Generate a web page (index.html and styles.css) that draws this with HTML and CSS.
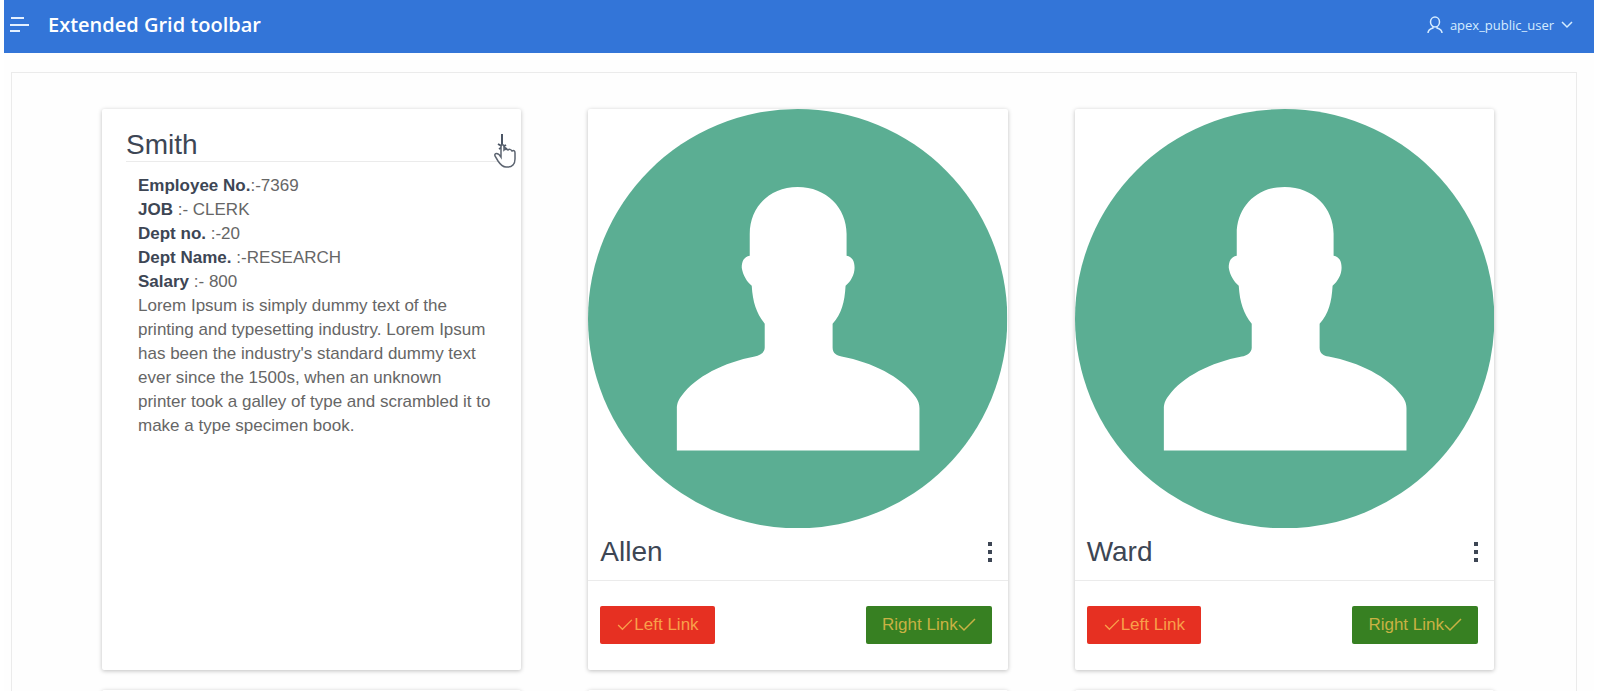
FILE: index.html
```html
<!DOCTYPE html>
<html lang="en">
<head>
  <meta charset="UTF-8">
  <meta name="viewport" content="width=device-width, initial-scale=1">
  <title>Extended Grid toolbar</title>
  <link rel="stylesheet" href="styles.css">
</head>
<body>

<!-- shared shapes -->
<svg class="symbols" aria-hidden="true">
  <symbol id="person" viewBox="0 0 420 420">
    <circle cx="210" cy="210" r="210" fill="#5bae93"/>
    <path fill="#fff" d="M210 78c29 0 49 21 49 47v22c6 1 8 6 8 12 0 7-4 14-9 18-1 17-4 28-13 38v24c0 6 4 8 9 9 31 6 59 20 73 39 4 5 5 9 5 13v42H89v-42c0-4 1-8 5-13 14-19 42-33 73-39 5-1 10-4 10-9v-24c-8-10-12-21-13-38-5-4-9-11-10-18 0-6 2-11 8-12l0-22c0-26 19-47 48-47z"/>
  </symbol>
  <symbol id="check" viewBox="0 0 18 14">
    <path fill="none" stroke="currentColor" stroke-width="1.5" d="M1 7l5 5L17 1"/>
  </symbol>
  <symbol id="dots" viewBox="0 0 6 20">
    <path fill="currentColor" d="M1 0h4v4H1zM1 8h4v4H1zM1 16h4v4H1z"/>
  </symbol>
</svg>

<div class="page">
  <header class="header">
    <button type="button" class="nav-btn" aria-label="Main navigation">
      <svg width="20" height="16" viewBox="0 0 20 16"><path d="M1 1h13M0 8h19M0 14h10" stroke="#e4f0ff" stroke-width="2"/></svg>
    </button>
    <h1 class="app-title">Extended Grid toolbar</h1>
    <button type="button" class="user-btn">
      <svg width="16" height="18" viewBox="0 0 16 18" fill="none" stroke="currentColor" stroke-width="1.5"><ellipse cx="8" cy="6" rx="4.5" ry="5"/><path d="M1 17c0-3 2-4 5-5l0-2M15 17c0-3-2-4-5-5l0-2"/></svg>
      <span>apex_public_user</span>
      <svg width="12" height="8" viewBox="0 0 12 8" fill="none" stroke="currentColor" stroke-width="1.5"><path d="M1 1l5 5 5-5"/></svg>
    </button>
  </header>

  <main class="content">
    <div class="region">
      <article class="card card-open">
        <h2 class="card-title">Smith</h2>
        <button type="button" class="close-btn" aria-label="Close">
          <svg width="24" height="36" viewBox="0 0 24 36"><path d="M8 1v14M4 11l9 5M5 16l7-4" stroke="#4c5665" stroke-width="2"/><path d="M7 24V14c0-3 3-3 3 0v3c1-1 3-1 4 0 1-1 3-1 4 1 2-1 3 0 3 2v6c0 5-3 8-7 8h-2c-4 0-6-3-8-6l-3-5c-1-3 3-4 6 1z" fill="#fff" stroke="#5c6470" stroke-width="1.5"/></svg>
        </button>
        <div class="details">
          <div><b>Employee No.</b>:-7369</div>
          <div><b>JOB</b> :- CLERK</div>
          <div><b>Dept no.</b> :-20</div>
          <div><b>Dept Name.</b> :-RESEARCH</div>
          <div><b>Salary</b> :- 800</div>
          <p>Lorem Ipsum is simply dummy text of the printing and typesetting industry. Lorem Ipsum has been the industry's standard dummy text ever since the 1500s, when an unknown printer took a galley of type and scrambled it to make a type specimen book.</p>
        </div>
      </article>

      <article class="card">
        <svg class="photo" viewBox="0 0 420 420"><use href="#person"/></svg>
        <div class="card-head">
          <h2 class="card-title">Allen</h2>
          <button type="button" class="more-btn" aria-label="More"><svg width="6" height="20"><use href="#dots"/></svg></button>
        </div>
        <div class="card-actions">
          <a href="#" class="btn btn-left"><svg width="18" height="12"><use href="#check"/></svg>Left Link</a>
          <a href="#" class="btn btn-right">Right Link<svg width="18" height="14"><use href="#check"/></svg></a>
        </div>
      </article>

      <article class="card">
        <svg class="photo" viewBox="0 0 420 420"><use href="#person"/></svg>
        <div class="card-head">
          <h2 class="card-title">Ward</h2>
          <button type="button" class="more-btn" aria-label="More"><svg width="6" height="20"><use href="#dots"/></svg></button>
        </div>
        <div class="card-actions">
          <a href="#" class="btn btn-left"><svg width="18" height="12"><use href="#check"/></svg>Left Link</a>
          <a href="#" class="btn btn-right">Right Link<svg width="18" height="14"><use href="#check"/></svg></a>
        </div>
      </article>

      <!-- next row -->
      <article class="card"></article>
      <article class="card"></article>
      <article class="card"></article>
    </div>
  </main>
</div>

</body>
</html>
```
FILE: styles.css
```css
* {
  box-sizing: border-box;
}

body {
  margin: 0;
  padding: 0 22px 7px 4px;
  height: 100vh;
  background: #fff;
  font-family: "Liberation Sans", Arial, sans-serif;
  color: #3d4654;
}

.symbols {
  display: none;
}

button {
  border: none;
  background: none;
  padding: 0;
  cursor: pointer;
}

.page {
  height: 100%;
  overflow: hidden;
  background: #fefefe;
}

/* top bar */
.header {
  display: flex;
  align-items: center;
  height: 53px;
  padding: 0 21px 4px 6px;
  background: #3375d8;
  color: #fff;
}

.nav-btn,
.user-btn,
.more-btn {
  display: flex;
  align-items: center;
}

.app-title {
  margin: 0 auto 0 18px;
  font-family: "Open Sans", "Segoe UI", sans-serif;
  font-size: 20px;
  font-weight: 600;
}

.user-btn {
  gap: 7px;
  color: #d5ecff;
  font-family: "Open Sans", "Segoe UI", sans-serif;
  font-size: 13px;
}

/* cards */
.content {
  padding: 19px 17px 0 7px;
}

.region {
  display: grid;
  grid-template-columns: repeat(3, 1fr);
  gap: 20px 67px;
  padding: 36px 82px 0 90px;
  border: 1px solid #ebebeb;
}

.card {
  position: relative;
  min-height: 561px;
  background: #fff;
  border-radius: 2px;
  box-shadow: 0 1px 4px rgba(0, 0, 0, 0.25);
}

.card-title {
  margin: 0;
  font-size: 28px;
  font-weight: normal;
  line-height: 32px;
}

.photo {
  display: block;
  width: 100%;
}

.card-head {
  display: flex;
  justify-content: space-between;
  align-items: center;
  padding: 8px 15px 12px 12px;
  border-bottom: 1px solid #ebebeb;
}

.more-btn {
  color: #3d4654;
}

.card-actions {
  display: flex;
  justify-content: space-between;
  padding: 25px 16px 25px 12px;
}

.btn {
  display: flex;
  align-items: center;
  height: 38px;
  padding: 0 16px;
  border-radius: 2px;
  font-size: 17px;
  text-decoration: none;
}

.btn-left {
  background: #e63022;
  color: #f9a04a;
}

.btn-right {
  background: #378022;
  color: #c9b244;
}

/* opened card */
.card-open {
  padding: 20px 12px 20px 24px;
}

.card-open .card-title {
  border-bottom: 1px solid #ebebeb;
}

.close-btn {
  position: absolute;
  top: 24px;
  right: 3px;
}

.details {
  padding: 12px 17px 0 12px;
  color: #666;
  font-size: 17px;
  line-height: 24px;
}

.details b {
  color: #3d4654;
}

.details p {
  margin: 0;
}
```
